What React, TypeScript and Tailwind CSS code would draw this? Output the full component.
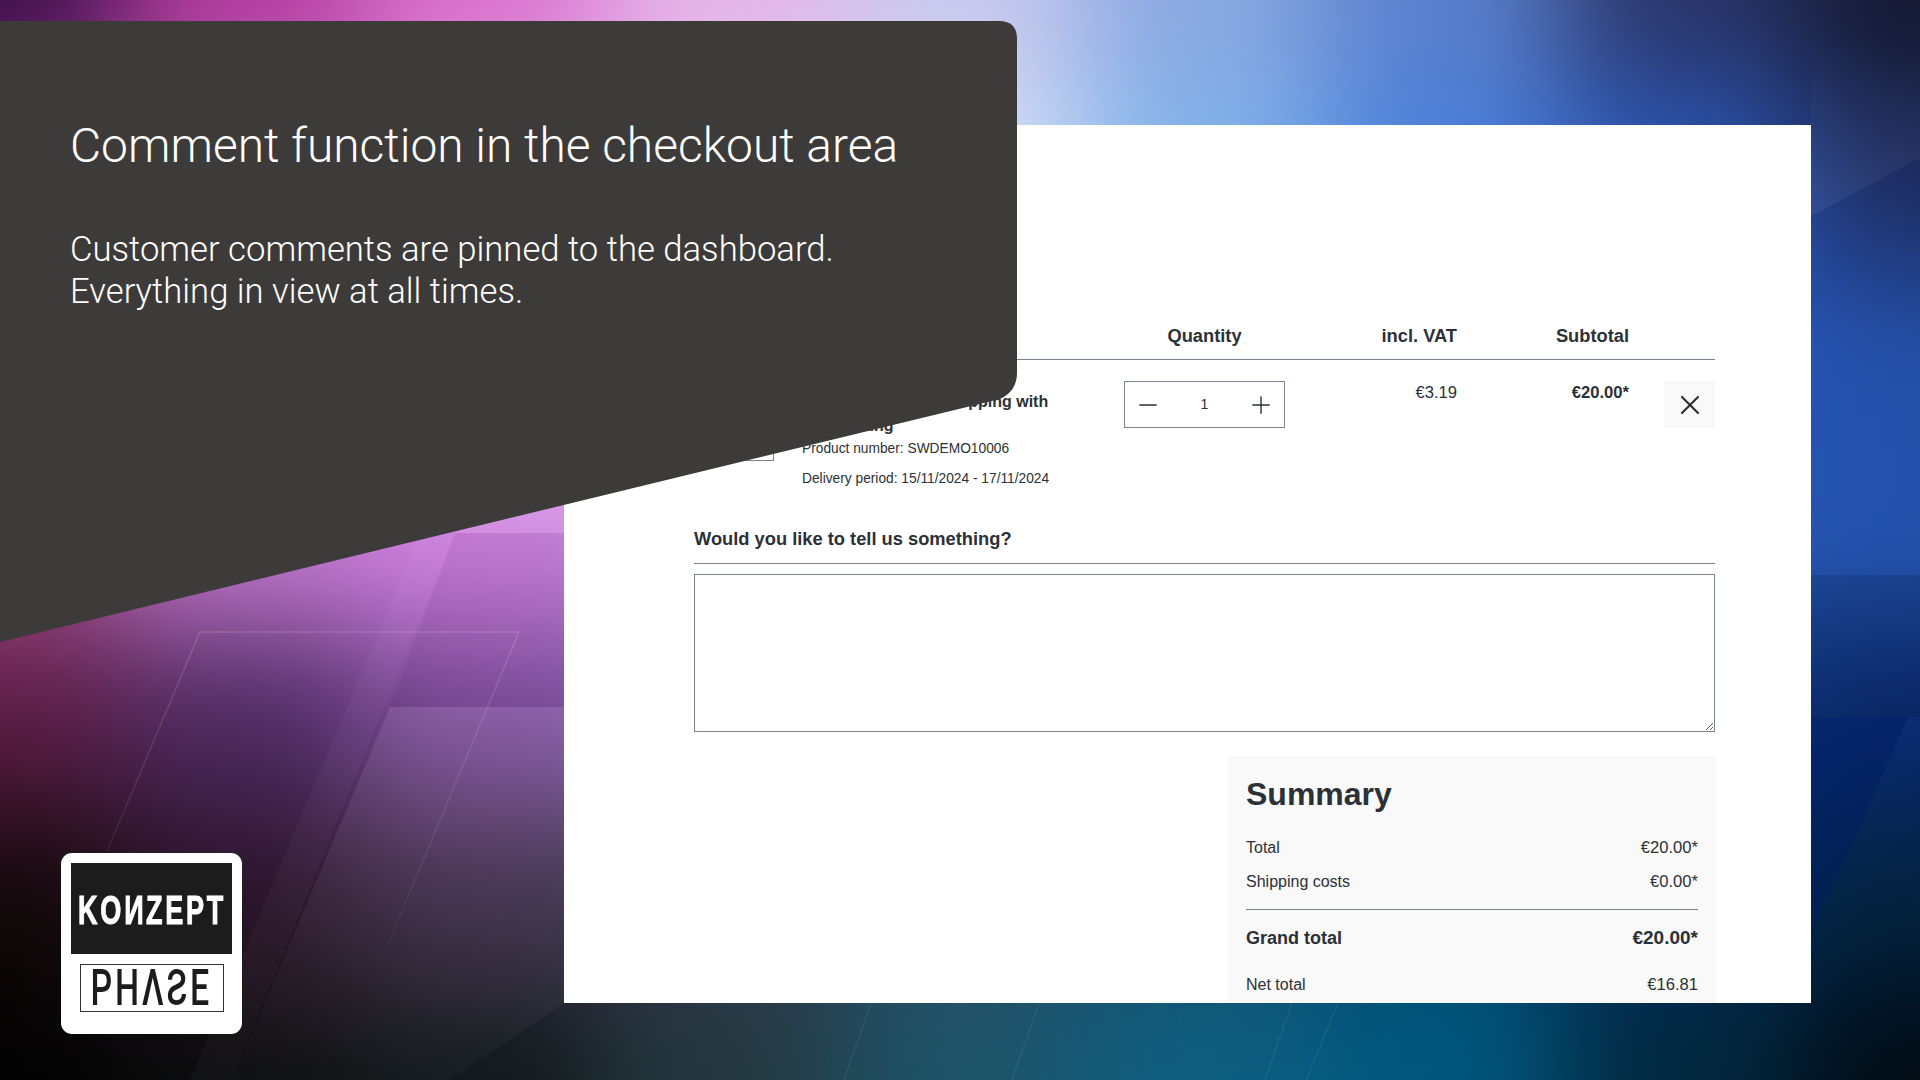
import { Minus, Plus, X } from 'lucide-react'

// colour mesh of the slide backdrop, one row every 180px, one column every 240px
const MESH = [
  ['#3c0f48', '#b03a9c', '#d870cc', '#e4b4e8', '#c8c8ee', '#8aa8e0', '#5a80cc', '#2a3468', '#141830'],
  ['#a04a98', '#d880d0', '#eeb0ec', '#f0d0f4', '#d8e4f8', '#80b4ec', '#4a80dc', '#2a58b8', '#1e2c60'],
  ['#a04a98', '#d080d8', '#e8b0ee', '#e8c0f0', '#c0c8f0', '#7090e0', '#3a6cd0', '#2858c0', '#2450a8'],
  ['#a04a88', '#c078cc', '#d080e0', '#c090e0', '#9080d0', '#5070c0', '#3060b8', '#2858b8', '#2452ac'],
  ['#5a1c42', '#4c2a60', '#7a4a98', '#8060b0', '#6060a0', '#305898', '#184890', '#103a88', '#0a2a70'],
  ['#100808', '#2a1428', '#3a2a44', '#32384a', '#2a4c68', '#14506c', '#064a70', '#022a55', '#03223e'],
  ['#020202', '#0a0c0c', '#10181a', '#24383f', '#1c5468', '#0e5e80', '#00587f', '#02283e', '#020a12'],
]

function Backdrop() {
  return (
    <svg className="absolute inset-0" width="1920" height="1080" viewBox="0 0 1920 1080">
      <defs>
        <filter id="mesh" filterUnits="userSpaceOnUse" x="-400" y="-400" width="2720" height="1880" colorInterpolationFilters="sRGB">
          <feGaussianBlur stdDeviation="62" />
        </filter>
        <linearGradient id="fade" x1="0" y1="0" x2="0" y2="1">
          <stop offset="0" stopColor="#fff" stopOpacity="0.09" />
          <stop offset="1" stopColor="#fff" stopOpacity="0.02" />
        </linearGradient>
        <linearGradient id="fadeUp" x1="0" y1="1" x2="0" y2="0">
          <stop offset="0" stopColor="#fff" stopOpacity="0.06" />
          <stop offset="1" stopColor="#fff" stopOpacity="0" />
        </linearGradient>
        <linearGradient id="lineFade" x1="0" y1="0" x2="0" y2="1">
          <stop offset="0" stopColor="#fff" stopOpacity="0.14" />
          <stop offset="1" stopColor="#fff" stopOpacity="0.04" />
        </linearGradient>
      </defs>
      <g filter="url(#mesh)">
        {MESH.map((row, r) =>
          row.map((color, c) => (
            <rect
              key={`${r}-${c}`}
              x={c === 0 ? -400 : c * 240 - 120}
              y={r === 0 ? -400 : r * 180 - 90}
              width={c === 0 || c === 8 ? 520 : 241}
              height={r === 0 || r === 6 ? 490 : 181}
              fill={color}
            />
          )),
        )}
      </g>

      {/* left facets */}
      <polygon points="455,533 564,533 564,420 500,420" fill="#fff" fillOpacity="0.1" />
      <polygon points="420,533 455,533 232,1080 190,1080" fill="#fff" fillOpacity="0.03" />
      <polygon points="390,707 564,707 564,1003 450,1080 232,1080" fill="url(#fade)" />
      <polygon points="455,533 564,533 564,707 390,707" fill="#000" fillOpacity="0.05" />
      <path d="M107 851 L200 632 H519 L388 944" fill="none" stroke="url(#lineFade)" strokeWidth="1.5" />

      {/* right facets */}
      <polygon points="1811,216 1920,158 1920,40 1811,40" fill="url(#fadeUp)" />
      <polygon points="1811,575 1920,575 1920,717 1811,717" fill="#000" fillOpacity="0.12" />
      <polygon points="1811,717 1908,717 1811,937" fill="#001a60" fillOpacity="0.45" />

      {/* thin lines under the white panel */}
      <g stroke="#fff" strokeOpacity="0.08" strokeWidth="1.2">
        <line x1="871" y1="1003" x2="844" y2="1080" />
        <line x1="1039" y1="1003" x2="1012" y2="1080" />
        <line x1="1292" y1="1003" x2="1265" y2="1080" />
        <line x1="1338" y1="1003" x2="1306" y2="1080" />
      </g>
    </svg>
  )
}

function CartTable() {
  return (
    <>
      <div className="grid grid-cols-[430px_161px_172px_172px_86px] border-b border-[#798490] pb-[11px] text-[18.3px] leading-6 font-bold">
        <div>Product</div>
        <div className="text-center">Quantity</div>
        <div className="text-right">incl. VAT</div>
        <div className="text-right">Subtotal</div>
        <div />
      </div>
      <div className="grid grid-cols-[430px_161px_172px_172px_86px] pt-[21px]">
        <div className="flex gap-7">
          <div className="h-20 w-20 shrink-0 border border-[#798490]" />
          <div className="w-[250px] pt-[9px]">
            <div className="text-[16px] leading-6 font-bold">Main product, free shipping with highlighting</div>
            <div className="text-[13.75px] leading-[21px]">Product number: SWDEMO10006</div>
            <div className="mt-[9px] text-[13.75px] leading-[21px] whitespace-nowrap">Delivery period: 15/11/2024 - 17/11/2024</div>
          </div>
        </div>
        <div>
          <div className="flex h-[47px] items-center justify-between border border-[#798490] px-[9px] text-[14px]">
            <Minus size={28} strokeWidth={1.2} />
            <span>1</span>
            <Plus size={28} strokeWidth={1.2} />
          </div>
        </div>
        <div className="text-right text-[16.6px] leading-6">€3.19</div>
        <div className="text-right text-[16.6px] leading-6 font-bold">€20.00*</div>
        <div className="flex justify-end">
          <div className="flex h-[47px] w-[51px] items-center justify-center bg-[#f9f9f9]">
            <X size={32} strokeWidth={1.6} />
          </div>
        </div>
      </div>
    </>
  )
}

function Summary() {
  return (
    <div className="mt-6 ml-[534px] w-[488px] rounded-[3px] bg-[#f9f9f9] px-[18px] pt-[19px] pb-6 text-[16px] leading-6">
      <h2 className="text-[32px] leading-[38px] font-bold">Summary</h2>
      <div className="mt-[23px] flex justify-between">
        <span>Total</span>
        <span className="text-[16.6px]">€20.00*</span>
      </div>
      <div className="mt-[10px] flex justify-between">
        <span>Shipping costs</span>
        <span className="text-[16.6px]">€0.00*</span>
      </div>
      <div className="mt-[15px] border-t border-[#798490]" />
      <div className="mt-4 flex justify-between text-[18px] font-bold">
        <span>Grand total</span>
        <span className="text-[19px]">€20.00*</span>
      </div>
      <div className="mt-[23px] flex justify-between">
        <span>Net total</span>
        <span className="text-[16.6px]">€16.81</span>
      </div>
    </div>
  )
}

function Logo() {
  return (
    <div className="absolute top-[853px] left-[61px] h-[181px] w-[181px] rounded-[11px] bg-white p-[10px] font-['Liberation_Sans',sans-serif]">
      <div className="flex h-[91px] items-center justify-center bg-[#1c1c1c] pt-[4px] text-white">
        <div className="flex origin-center scale-x-[0.66] text-[41px] leading-none font-bold tracking-[4px] [-webkit-text-stroke:1px_white]">
          KO<span className="mr-1 inline-block -scale-x-100 tracking-normal">N</span>ZEPT
        </div>
      </div>
      <div className="mx-auto mt-[10px] flex h-[48px] w-[144px] items-center justify-center border border-[#333] text-[#1c1c1c]">
        <div className="flex origin-center scale-x-[0.68] font-['Roboto',sans-serif] text-[50px] leading-none font-medium tracking-[4px]">
          PHΛ<span className="mr-1 inline-block -scale-x-100 tracking-normal">S</span>E
        </div>
      </div>
    </div>
  )
}

export default function App() {
  return (
    <div className="relative h-[1080px] w-[1920px] overflow-hidden bg-black pt-[125px] pl-[564px]">
      <Backdrop />

      <div className="relative h-[878px] w-[1247px] overflow-hidden bg-white pt-[199px] pr-[96px] pl-[130px] font-['Liberation_Sans',sans-serif] text-[#2b3136]">
        <CartTable />
        <div className="mt-[38px] border-b border-[#798490] pb-3 text-[18.3px] leading-6 font-bold">
          Would you like to tell us something?
        </div>
        <textarea className="mt-[10px] block h-[158px] w-full border border-[#798490] bg-white" />
        <Summary />
      </div>

      <div className="absolute top-[21px] left-0 h-[624px] w-[1017px] bg-[#3d3b3a] pt-[95px] pl-[70px] font-['Roboto',sans-serif] font-light text-white [clip-path:path('M0_0H999Q1017_0_1017_18V352Q1017_370_1000_378L0_621Z')]">
        <h1 className="text-[47.9px] leading-[60px] font-light">Comment function in the checkout area</h1>
        <p className="mt-[52px] text-[34.67px] leading-[42px]">
          Customer comments are pinned to the dashboard.
          <br />
          Everything in view at all times.
        </p>
      </div>

      <Logo />
    </div>
  )
}
